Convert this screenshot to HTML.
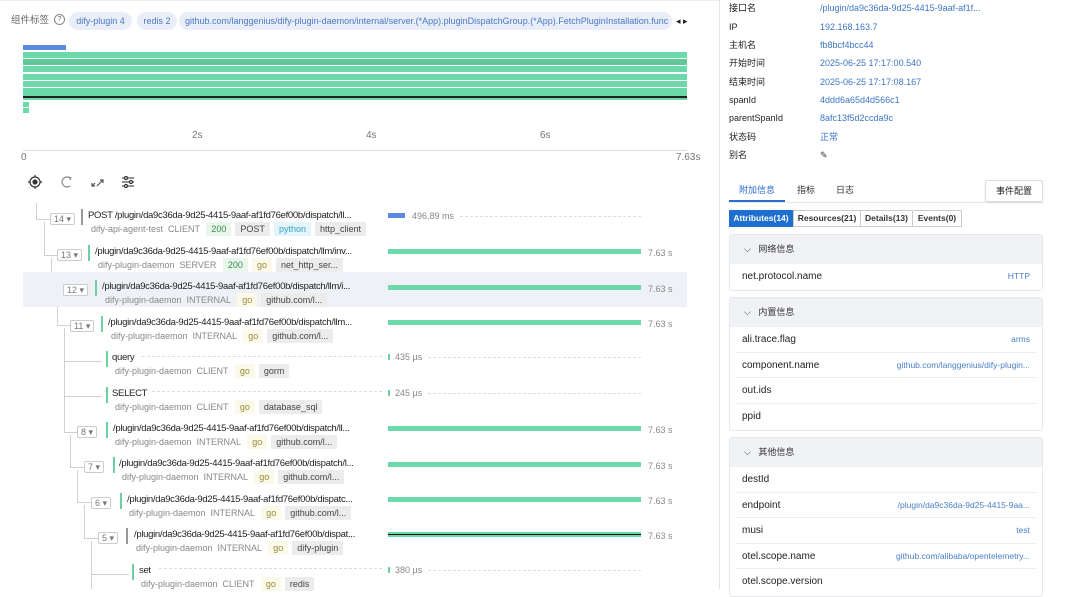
<!DOCTYPE html>
<html><head><meta charset="utf-8"><style>
*{margin:0;padding:0;box-sizing:border-box}
body{width:1080px;height:589px;overflow:hidden;background:#fff;font-family:"Liberation Sans","Noto Sans CJK SC",sans-serif;color:#222;position:relative}
.a{position:absolute;white-space:nowrap;line-height:12px}
.chip{position:absolute;top:12px;height:18px;border-radius:9px;background:#e9eef9;color:#4a78c4;font-size:9px;line-height:18px;padding:0 6px;overflow:hidden;white-space:nowrap;text-align:center}
.g{position:absolute;left:23px;width:664px;height:6px;background:#6dd9ab}
.t{font-size:9.5px;letter-spacing:-0.3px;color:#222}
.s{font-size:9px;color:#888;line-height:14px}
.tag{display:inline-block;padding:0 5px;height:14px;line-height:14px;margin-left:4px;font-size:9px}
.tg{background:#e8f6ec;color:#3a8a4a}
.tgr{background:#ececec;color:#444}
.tb{background:#e3f4fb;color:#3aa0c8}
.ty{background:#fbf9ea;color:#998a3a}
.badge{position:absolute;height:12px;border:1px solid #ccc;border-radius:2px;font-size:9px;color:#777;line-height:10px;padding:0 3px;background:#fff}
.vb{position:absolute;width:2px;height:16px;background:#6dd0a0}
.bar{position:absolute;left:388px;width:253px;height:5px;background:#6dd9ab}
.dur{position:absolute;left:648px;font-size:9px;color:#888;line-height:12px}
.dot{position:absolute;border-top:1px dashed #ddd;height:0}
.ln{position:absolute;background:#d0d0d0}
.lab{position:absolute;left:729px;font-size:9px;color:#222;line-height:12px}
.val{position:absolute;left:820px;font-size:9px;color:#3d76c5;line-height:12px;white-space:nowrap}
.card{position:absolute;left:729px;width:314px;border:1px solid #e6e8ec;border-radius:3px;background:#fff;overflow:hidden}
.ch{height:29px;background:#f0f2f6;font-size:9px;line-height:29px;padding-left:14px;color:#333}
.cr{height:25.5px;margin:0 6px;border-bottom:1px solid #eee;font-size:10px;line-height:25.5px;padding-left:6px;position:relative}
.cr span{position:absolute;right:6px;font-size:8.5px;color:#4a7fc6}
</style></head><body>
<div class="a" style="left:0;top:0;width:719px;height:1px;background:#eee"></div>
<div class="a" style="left:719px;top:0;width:1px;height:589px;background:#e4e4e4"></div>
<div class="a" style="left:11px;top:15px;font-size:9.5px;color:#666">组件标签</div>
<div class="a" style="left:54px;top:14px;width:11px;height:11px;border:1px solid #888;border-radius:50%;font-size:7px;line-height:9px;text-align:center;color:#666">?</div>
<div class="chip" style="left:69px;width:63px">dify-plugin 4</div>
<div class="chip" style="left:137px;width:40px">redis 2</div>
<div class="chip" style="left:179px;width:493px;text-align:left">github.com/langgenius/dify-plugin-daemon/internal/server.(*App).pluginDispatchGroup.(*App).FetchPluginInstallation.func</div>
<div class="a" style="left:676px;top:15px;font-size:9px">◂ ▸</div>
<div class="a" style="left:23px;top:45px;width:43px;height:5px;background:#5b8be0"></div>
<div class="g" style="top:52px"></div><div class="g" style="top:59px;background:#5fc698"></div><div class="g" style="top:66px"></div><div class="g" style="top:74px"></div><div class="g" style="top:81px"></div><div class="g" style="top:88px"></div><div class="g" style="top:94px;height:6px"></div>
<div class="a" style="left:23px;top:96px;width:664px;height:2px;background:#222"></div>
<div class="a" style="left:23px;top:102px;width:6px;height:5px;background:#6dd9ab"></div>
<div class="a" style="left:23px;top:108px;width:6px;height:5px;background:#6dd9ab"></div>
<div class="a" style="left:192px;top:130px;font-size:10px;color:#777">2s</div>
<div class="a" style="left:366px;top:130px;font-size:10px;color:#777">4s</div>
<div class="a" style="left:540px;top:130px;font-size:10px;color:#777">6s</div>
<div class="a" style="left:23px;top:150px;width:664px;height:1px;background:#ddd"></div>
<div class="a" style="left:21px;top:152px;font-size:10px;color:#777">0</div>
<div class="a" style="left:676px;top:152px;font-size:10px;color:#777">7.63s</div>
<svg class="a" style="left:28px;top:175px" width="115" height="15" fill="none" stroke="#333" stroke-width="1.2">
<circle cx="7" cy="7" r="5"/><circle cx="7" cy="7" r="2" fill="#333"/><path d="M7 0v2M7 12v2M0 7h2M12 7h2"/>
<path d="M42 3a5 5 0 1 0 0 8" stroke="#888"/><path d="M41 2l2 1-1 2" stroke="#888"/>
<path d="M69 11l6-6M72 5h3v3M64 8v3h3M64 11l3-3" stroke="#555"/>
<path d="M94 3h12M94 7h12M94 11h12" stroke="#555"/><circle cx="98" cy="3" r="1.5" fill="#fff"/><circle cx="103" cy="7" r="1.5" fill="#fff"/><circle cx="98" cy="11" r="1.5" fill="#fff"/>
</svg>
<div class="ln" style="left:36px;top:203px;width:1px;height:16px"></div><div class="ln" style="left:36px;top:219px;width:14px;height:1px"></div>
<div class="ln" style="left:44px;top:222px;width:1px;height:33px"></div><div class="ln" style="left:44px;top:255px;width:13px;height:1px"></div>
<div class="ln" style="left:51px;top:258px;width:1px;height:33px"></div><div class="ln" style="left:51px;top:290px;width:12px;height:1px"></div>
<div class="ln" style="left:57px;top:293px;width:1px;height:33px"></div><div class="ln" style="left:57px;top:325px;width:13px;height:1px"></div>
<div class="ln" style="left:64px;top:328px;width:1px;height:105px"></div><div class="ln" style="left:64px;top:361px;width:38px;height:1px"></div><div class="ln" style="left:64px;top:396px;width:38px;height:1px"></div><div class="ln" style="left:64px;top:432px;width:13px;height:1px"></div>
<div class="ln" style="left:70px;top:435px;width:1px;height:33px"></div><div class="ln" style="left:70px;top:467px;width:14px;height:1px"></div>
<div class="ln" style="left:77px;top:470px;width:1px;height:33px"></div><div class="ln" style="left:77px;top:502px;width:14px;height:1px"></div>
<div class="ln" style="left:84px;top:505px;width:1px;height:33px"></div><div class="ln" style="left:84px;top:538px;width:14px;height:1px"></div>
<div class="ln" style="left:91px;top:541px;width:1px;height:48px"></div><div class="ln" style="left:91px;top:574px;width:38px;height:1px"></div>
<div class="a" style="left:23px;top:272px;width:664px;height:35px;background:#eef1f6"></div>

<div class="badge" style="left:50px;top:213px">14 ▾</div><div class="vb" style="left:81px;top:209px;background:#999"></div>
<div class="a t" style="left:88px;top:210px">POST /plugin/da9c36da-9d25-4415-9aaf-af1fd76ef00b/dispatch/ll...</div>
<div class="a s" style="left:91px;top:222px">dify-api-agent-test&nbsp; CLIENT <span class="tag tg">200</span><span class="tag tgr">POST</span><span class="tag tb">python</span><span class="tag tgr">http_client</span></div>
<div class="a" style="left:388px;top:213px;width:17px;height:5px;background:#5b8be0"></div><div class="a s" style="left:412px;top:209px">496.89 ms</div><div class="dot" style="left:460px;top:216px;width:181px"></div>

<div class="badge" style="left:57px;top:249px">13 ▾</div><div class="vb" style="left:88px;top:245px"></div>
<div class="a t" style="left:95px;top:246px">/plugin/da9c36da-9d25-4415-9aaf-af1fd76ef00b/dispatch/llm/inv...</div>
<div class="a s" style="left:98px;top:258px">dify-plugin-daemon&nbsp; SERVER <span class="tag tg">200</span><span class="tag ty">go</span><span class="tag tgr">net_http_ser...</span></div>
<div class="bar" style="top:249px"></div><div class="dur" style="top:247px">7.63 s</div>

<div class="badge" style="left:63px;top:284px">12 ▾</div><div class="vb" style="left:95px;top:280px"></div>
<div class="a t" style="left:102px;top:281px">/plugin/da9c36da-9d25-4415-9aaf-af1fd76ef00b/dispatch/llm/i...</div>
<div class="a s" style="left:105px;top:293px">dify-plugin-daemon&nbsp; INTERNAL <span class="tag ty">go</span><span class="tag tgr">github.com/l...</span></div>
<div class="bar" style="top:285px"></div><div class="dur" style="top:283px">7.63 s</div>

<div class="badge" style="left:70px;top:320px">11 ▾</div><div class="vb" style="left:101px;top:316px"></div>
<div class="a t" style="left:108px;top:317px">/plugin/da9c36da-9d25-4415-9aaf-af1fd76ef00b/dispatch/llm...</div>
<div class="a s" style="left:111px;top:329px">dify-plugin-daemon&nbsp; INTERNAL <span class="tag ty">go</span><span class="tag tgr">github.com/l...</span></div>
<div class="bar" style="top:320px"></div><div class="dur" style="top:318px">7.63 s</div>

<div class="vb" style="left:106px;top:351px"></div>
<div class="a t" style="left:112px;top:352px">query</div><div class="dot" style="left:142px;top:356px;width:240px"></div>
<div class="a s" style="left:115px;top:364px">dify-plugin-daemon&nbsp; CLIENT <span class="tag ty">go</span><span class="tag tgr">gorm</span></div>
<div class="a" style="left:388px;top:354px;width:2px;height:6px;background:#6dd0a0"></div><div class="a s" style="left:395px;top:350px">435 µs</div><div class="dot" style="left:428px;top:357px;width:213px"></div>

<div class="vb" style="left:106px;top:387px"></div>
<div class="a t" style="left:112px;top:388px">SELECT</div><div class="dot" style="left:152px;top:391px;width:230px"></div>
<div class="a s" style="left:115px;top:400px">dify-plugin-daemon&nbsp; CLIENT <span class="tag ty">go</span><span class="tag tgr">database_sql</span></div>
<div class="a" style="left:388px;top:390px;width:2px;height:6px;background:#6dd0a0"></div><div class="a s" style="left:395px;top:386px">245 µs</div><div class="dot" style="left:428px;top:393px;width:213px"></div>

<div class="badge" style="left:77px;top:426px">8 ▾</div><div class="vb" style="left:106px;top:422px"></div>
<div class="a t" style="left:113px;top:423px">/plugin/da9c36da-9d25-4415-9aaf-af1fd76ef00b/dispatch/ll...</div>
<div class="a s" style="left:115px;top:435px">dify-plugin-daemon&nbsp; INTERNAL <span class="tag ty">go</span><span class="tag tgr">github.com/l...</span></div>
<div class="bar" style="top:426px"></div><div class="dur" style="top:424px">7.63 s</div>

<div class="badge" style="left:84px;top:461px">7 ▾</div><div class="vb" style="left:113px;top:457px"></div>
<div class="a t" style="left:119px;top:458px">/plugin/da9c36da-9d25-4415-9aaf-af1fd76ef00b/dispatch/l...</div>
<div class="a s" style="left:122px;top:470px">dify-plugin-daemon&nbsp; INTERNAL <span class="tag ty">go</span><span class="tag tgr">github.com/l...</span></div>
<div class="bar" style="top:462px"></div><div class="dur" style="top:460px">7.63 s</div>

<div class="badge" style="left:91px;top:497px">6 ▾</div><div class="vb" style="left:120px;top:493px"></div>
<div class="a t" style="left:127px;top:494px">/plugin/da9c36da-9d25-4415-9aaf-af1fd76ef00b/dispatc...</div>
<div class="a s" style="left:129px;top:506px">dify-plugin-daemon&nbsp; INTERNAL <span class="tag ty">go</span><span class="tag tgr">github.com/l...</span></div>
<div class="bar" style="top:497px"></div><div class="dur" style="top:495px">7.63 s</div>

<div class="badge" style="left:98px;top:532px">5 ▾</div><div class="vb" style="left:126px;top:528px;background:#999"></div>
<div class="a t" style="left:134px;top:529px">/plugin/da9c36da-9d25-4415-9aaf-af1fd76ef00b/dispat...</div>
<div class="a s" style="left:136px;top:541px">dify-plugin-daemon&nbsp; INTERNAL <span class="tag ty">go</span><span class="tag tgr">dify-plugin</span></div>
<div class="bar" style="top:532px"></div><div class="a" style="left:388px;top:534px;width:253px;height:1px;background:#111"></div><div class="dur" style="top:530px">7.63 s</div>

<div class="vb" style="left:132px;top:564px"></div>
<div class="a t" style="left:139px;top:565px">set</div><div class="dot" style="left:159px;top:568px;width:223px"></div>
<div class="a s" style="left:141px;top:577px">dify-plugin-daemon&nbsp; CLIENT <span class="tag ty">go</span><span class="tag tgr">redis</span></div>
<div class="a" style="left:388px;top:567px;width:2px;height:6px;background:#6dd0a0"></div><div class="a s" style="left:395px;top:563px">380 µs</div><div class="dot" style="left:428px;top:570px;width:213px"></div>

<div class="lab" style="top:2px">接口名</div><div class="val" style="top:2px">/plugin/da9c36da-9d25-4415-9aaf-af1f...</div>
<div class="lab" style="top:21px">IP</div><div class="val" style="top:21px">192.168.163.7</div>
<div class="lab" style="top:39px">主机名</div><div class="val" style="top:39px">fb8bcf4bcc44</div>
<div class="lab" style="top:57px">开始时间</div><div class="val" style="top:57px">2025-06-25 17:17:00.540</div>
<div class="lab" style="top:76px">结束时间</div><div class="val" style="top:76px">2025-06-25 17:17:08.167</div>
<div class="lab" style="top:94px">spanId</div><div class="val" style="top:94px">4ddd6a65d4d566c1</div>
<div class="lab" style="top:112px">parentSpanId</div><div class="val" style="top:112px">8afc13f5d2ccda9c</div>
<div class="lab" style="top:131px">状态码</div><div class="val" style="top:131px">正常</div>
<div class="lab" style="top:149px">别名</div><div class="val" style="top:149px;color:#333">✎</div>
<div class="a" style="left:729px;top:202px;width:314px;height:1px;background:#e8e8e8"></div>
<div class="a" style="left:739px;top:184px;font-size:9px;color:#2a6ccf">附加信息</div>
<div class="a" style="left:729px;top:200px;width:56px;height:2px;background:#2a6ccf"></div>
<div class="a" style="left:797px;top:184px;font-size:9px;color:#333">指标</div>
<div class="a" style="left:836px;top:184px;font-size:9px;color:#333">日志</div>
<div class="a" style="left:985px;top:180px;width:58px;height:22px;border:1px solid #ddd;border-radius:2px;font-size:9px;line-height:20px;text-align:center;box-shadow:0 1px 2px rgba(0,0,0,.08)">事件配置</div>
<div class="a" style="left:729px;top:210px;height:17px;display:flex;font-size:8.5px;font-weight:bold;line-height:15px">
<div style="width:64px;background:#1f6fd0;color:#fff;text-align:center;border:1px solid #1f6fd0">Attributes(14)</div>
<div style="width:68px;border:1px solid #ccc;text-align:center;color:#333">Resources(21)</div>
<div style="width:52px;border:1px solid #ccc;border-left:0;text-align:center;color:#333">Details(13)</div>
<div style="width:49px;border:1px solid #ccc;border-left:0;text-align:center;color:#333">Events(0)</div></div>
<div class="card" style="top:234px;height:57px"><div class="ch">⌵&nbsp;&nbsp; 网络信息</div><div class="cr" style="border:0">net.protocol.name<span>HTTP</span></div></div>
<div class="card" style="top:297px;height:134px"><div class="ch">⌵&nbsp;&nbsp; 内置信息</div>
<div class="cr">ali.trace.flag<span>arms</span></div><div class="cr">component.name<span>github.com/langgenius/dify-plugin...</span></div><div class="cr">out.ids</div><div class="cr" style="border:0">ppid</div></div>
<div class="card" style="top:437px;height:160px"><div class="ch">⌵&nbsp;&nbsp; 其他信息</div>
<div class="cr">destId</div><div class="cr">endpoint<span>/plugin/da9c36da-9d25-4415-9aa...</span></div><div class="cr">musi<span>test</span></div><div class="cr">otel.scope.name<span>github.com/alibaba/opentelemetry...</span></div><div class="cr" style="border:0">otel.scope.version</div></div>
</body></html>
